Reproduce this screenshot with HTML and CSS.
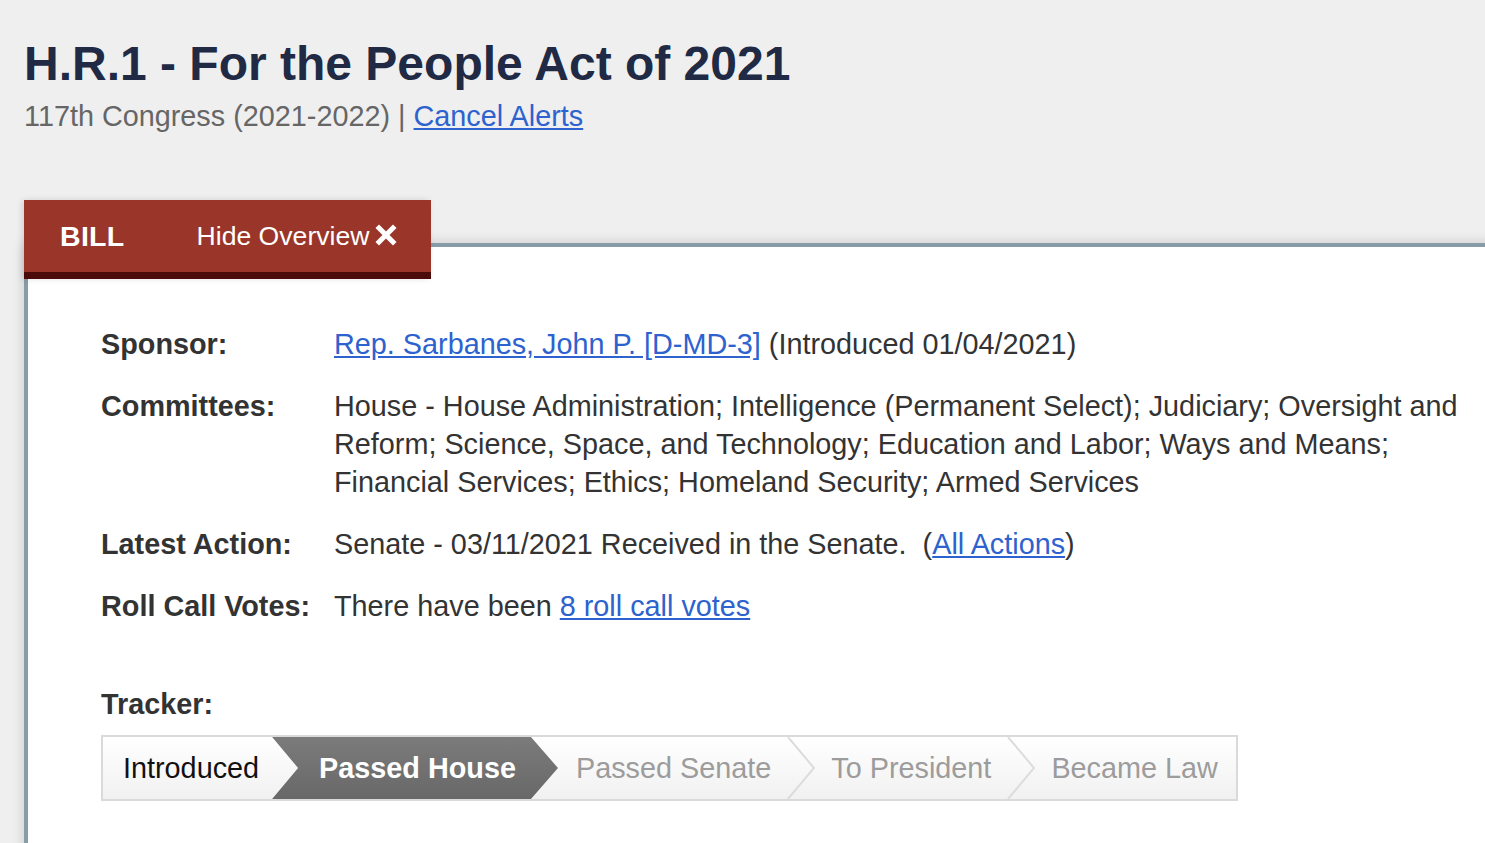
FILE: index.html
```html
<!DOCTYPE html>
<html lang="en">
<head>
<meta charset="utf-8">
<title>H.R.1 - For the People Act of 2021</title>
<link rel="stylesheet" href="styles.css">
</head>
<body>
<div class="page">
  <header class="head">
    <h1 class="title">H.R.1 - For the People Act of 2021</h1>
    <p class="sub">117th Congress (2021-2022) | <a href="#">Cancel Alerts</a></p>
  </header>
  <div class="overview">
    <div class="tab">
      <span class="tab-bill">BILL</span>
      <span class="tab-hide">Hide Overview<svg class="x-icon" viewBox="0 0 22 22" width="22" height="22" aria-hidden="true"><path d="M4 4 L18 18 M18 4 L4 18" stroke="#fff" stroke-width="5" stroke-linecap="square" fill="none"/></svg></span>
    </div>
    <div class="panel">
      <div class="facts">
        <div class="label">Sponsor:</div>
        <div class="value"><a href="#">Rep. Sarbanes, John P. [D-MD-3]</a> (Introduced 01/04/2021)</div>
        <div class="label">Committees:</div>
        <div class="value">House - House Administration; Intelligence (Permanent Select); Judiciary; Oversight and Reform; Science, Space, and Technology; Education and Labor; Ways and Means; Financial Services; Ethics; Homeland Security; Armed Services</div>
        <div class="label">Latest Action:</div>
        <div class="value">Senate - 03/11/2021 Received in the Senate.&nbsp; (<a href="#">All Actions</a>)</div>
        <div class="label">Roll Call Votes:</div>
        <div class="value">There have been <a href="#">8 roll call votes</a></div>
      </div>
      <div class="tracker-label">Tracker:</div>
      <ol class="tracker">
        <li class="step step-first">Introduced</li>
        <li class="step step-current">Passed House</li>
        <li class="step step-todo step-after-current">Passed Senate</li>
        <li class="sep" aria-hidden="true"><svg viewBox="0 0 28 62" width="28" height="62" preserveAspectRatio="none"><polyline points="1,0 27,31 1,62" fill="none" stroke="#dcdcdc" stroke-width="2"/></svg></li>
        <li class="step step-todo">To President</li>
        <li class="sep" aria-hidden="true"><svg viewBox="0 0 28 62" width="28" height="62" preserveAspectRatio="none"><polyline points="1,0 27,31 1,62" fill="none" stroke="#dcdcdc" stroke-width="2"/></svg></li>
        <li class="step step-todo step-last">Became Law</li>
      </ol>
    </div>
  </div>
</div>
</body>
</html>
```
FILE: styles.css
```css
html, body {
  margin: 0;
  padding: 0;
}
body {
  background: #efefef;
  font-family: "Liberation Sans", Arial, sans-serif;
  color: #333;
  height: 843px;
  overflow: hidden;
}
a {
  color: #2d62cf;
  text-decoration: underline;
}
.page {
  padding: 0 0 0 24px;
}
.head {
  padding-top: 36px;
}
.title {
  margin: 0;
  font-size: 48px;
  line-height: 55px;
  font-weight: bold;
  color: #212a44;
}
.sub {
  margin: 8px 0 0 0;
  font-size: 28.8px;
  line-height: 34px;
  color: #666;
}
.overview {
  margin-top: 67px;
}
.tab {
  position: relative;
  z-index: 2;
  width: 371px;
  height: 72px;
  background: #993629;
  border-bottom: 7px solid #4b0b0a;
  display: flex;
  align-items: center;
  padding-left: 36px;
  box-sizing: content-box;
  margin-bottom: -36px;
  color: #fff;
  box-shadow: -2px 0 6px rgba(0,0,0,0.12);
}
.tab-bill {
  font-weight: bold;
  font-size: 28.5px;
  letter-spacing: 0.3px;
}
.tab-hide {
  margin-left: 72px;
  font-size: 26.6px;
  display: flex;
  align-items: center;
}
.x-icon {
  margin-left: 6px;
  margin-top: -3px;
}
.panel {
  background: #fff;
  border-top: 4px solid #889ca8;
  border-left: 4px solid #889ca8;
  margin-right: -40px;
  padding: 78px 0 200px 73px;
  box-shadow: 0 0 12px rgba(0,0,0,0.16);
  font-size: 28.8px;
  line-height: 38px;
}
.facts {
  display: grid;
  grid-template-columns: 233px 1136px;
  row-gap: 24px;
}
.label {
  font-weight: bold;
  color: #333;
}
.value {
  color: #333;
}
.tracker-label {
  margin-top: 60px;
  font-weight: bold;
  color: #333;
}
.tracker {
  list-style: none;
  margin: 12px 0 0 0;
  padding: 0;
  display: flex;
  width: 1133px;
  height: 62px;
  border: 2px solid #dadada;
  background: linear-gradient(#ffffff, #f1f1f1);
}
.step {
  display: flex;
  align-items: center;
  white-space: nowrap;
}
.step-first {
  color: #111;
  padding: 0 13px 0 20px;
}
.step-current {
  color: #fff;
  font-weight: bold;
  padding: 0 42px 0 47px;
  background: linear-gradient(#7b7b7b, #686868);
  clip-path: polygon(0 0, calc(100% - 27px) 0, 100% 50%, calc(100% - 27px) 100%, 0 100%, 26px 50%);
}
.step-todo {
  color: #9c9c9c;
  padding: 0 16px 0 16px;
}
.step-after-current {
  padding-left: 18px;
}
.step-last {
  padding-right: 18px;
}
.sep {
  display: flex;
  width: 28px;
  height: 62px;
}
```
